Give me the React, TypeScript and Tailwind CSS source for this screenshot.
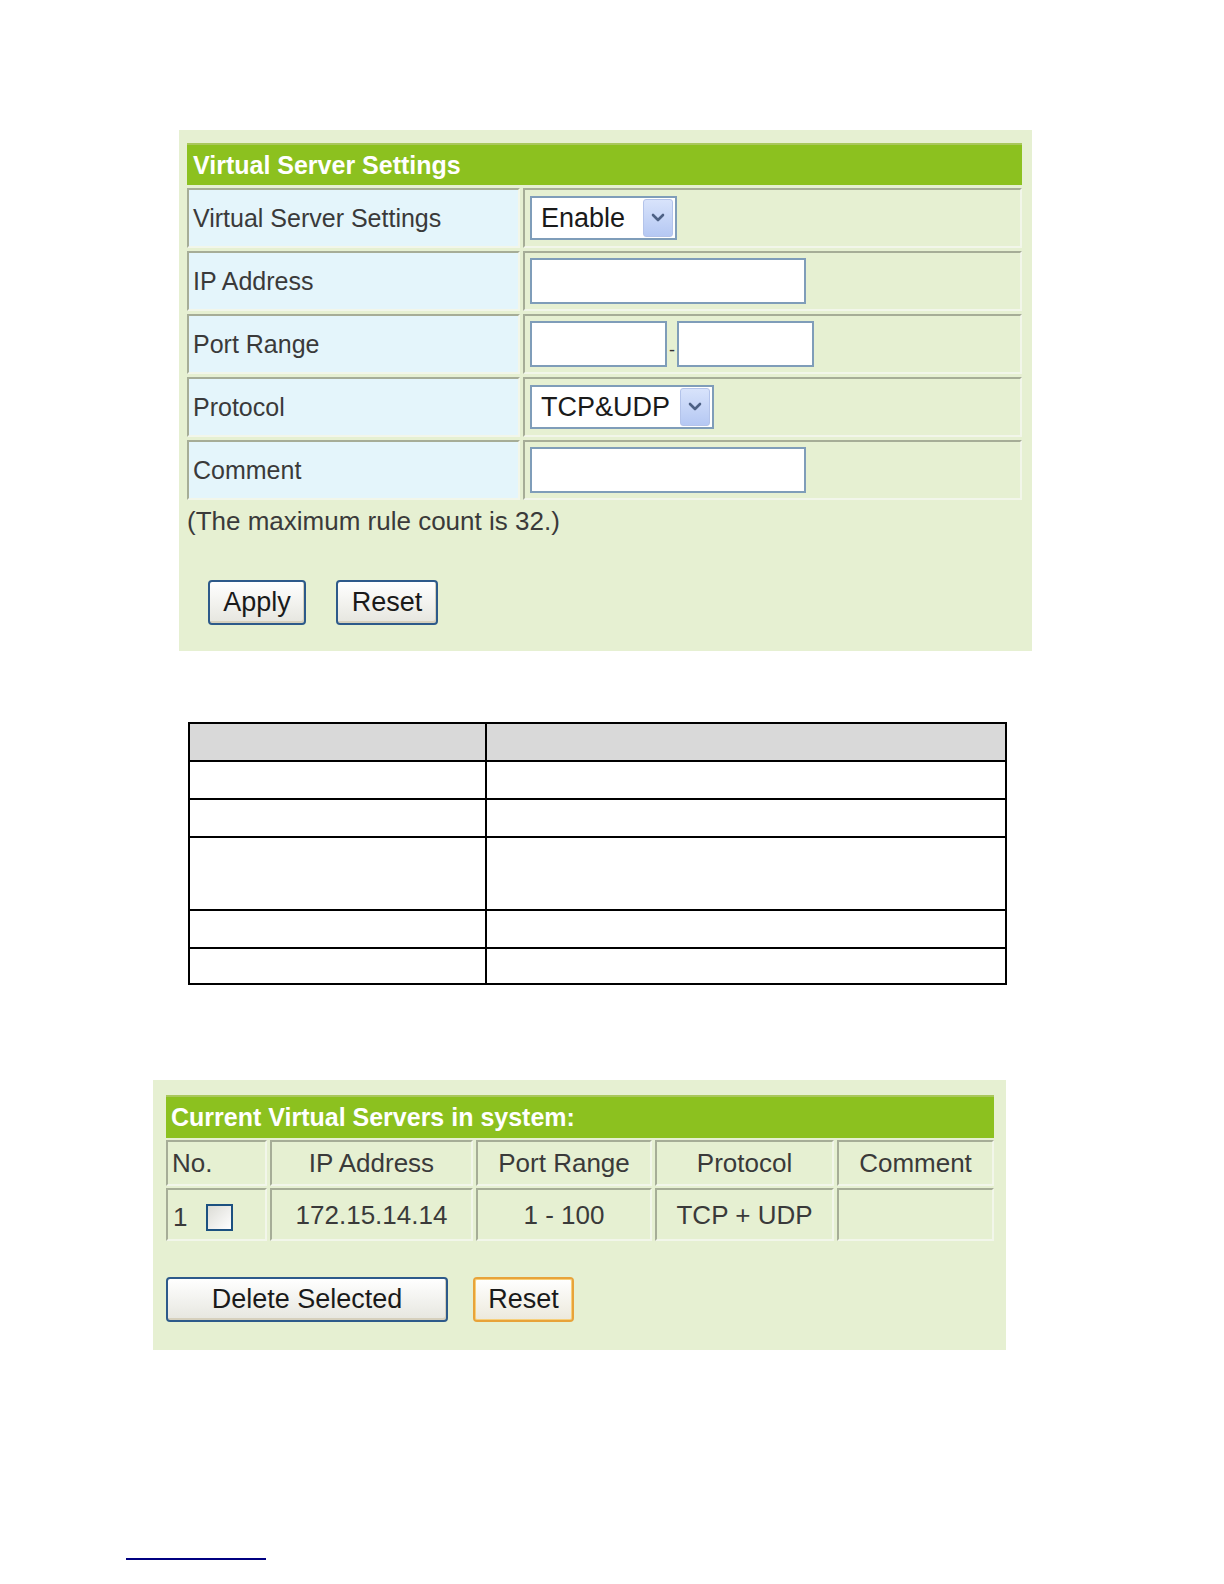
import React from 'react';

const font = { fontFamily: '"Liberation Sans", Arial, sans-serif' };

function Chevron() {
  return (
    <svg width="14" height="10" viewBox="0 0 14 10" aria-hidden>
      <path d="M2 2l5 5 5-5" fill="none" stroke="#4d6185" strokeWidth="2.6" strokeLinecap="round" strokeLinejoin="round" />
    </svg>
  );
}

function Select({ value, width }: { value: string; width: string }) {
  return (
    <div className={`flex h-[44px] items-center border-2 border-[#7f9db9] bg-white ${width}`}>
      <span className="flex-1 pl-[9px] text-[27px] leading-none text-[#1a1a1a]">{value}</span>
      <span className="mr-[2px] grid h-[38px] w-[30px] place-items-center rounded-[3px] border border-[#b3c3ea] bg-gradient-to-b from-[#d8e3fb] to-[#b5c8f3]">
        <Chevron />
      </span>
    </div>
  );
}

function Input({ width }: { width: string }) {
  return <div className={`h-[46px] border-2 border-[#7f9db9] bg-white ${width}`} />;
}

const cellBorder = 'border-2 border-t-[#a6ad97] border-l-[#a6ad97] border-b-[#f2f6ea] border-r-[#f2f6ea]';

function Row({ label, children }: { label: string; children: React.ReactNode }) {
  return (
    <div className="flex h-[60px] gap-[3px]">
      <div className={`flex w-[333px] items-center bg-[#e4f5fb] pl-[4px] text-[25px] leading-none text-[#3a3a3a] ${cellBorder}`}>
        {label}
      </div>
      <div className={`flex flex-1 items-center gap-[2px] pl-[5px] ${cellBorder}`}>{children}</div>
    </div>
  );
}

function Button({ children, className = '' }: { children: React.ReactNode; className?: string }) {
  return (
    <div
      className={`grid h-[45px] place-items-center rounded-[4px] border-2 border-[#2d5a8a] bg-gradient-to-b from-white to-[#e6e6df] text-[27px] leading-none text-[#1a1a1a] shadow-[inset_-1px_-2px_0_#d6d0bd] ${className}`}
    >
      {children}
    </div>
  );
}

export default function App() {
  const cols = [
    { w: 'w-[101px]', head: 'No.', align: 'justify-start pl-[4px]' },
    { w: 'w-[203px]', head: 'IP Address', align: 'justify-center' },
    { w: 'w-[176px]', head: 'Port Range', align: 'justify-center' },
    { w: 'w-[179px]', head: 'Protocol', align: 'justify-center' },
    { w: 'w-[157px]', head: 'Comment', align: 'justify-center' },
  ];

  return (
    <div className="w-full bg-white pt-[130px] pb-[20px]" style={font}>
      {/* settings form */}
      <div className="ml-[179px] w-[853px] bg-[#e6f0d2] pb-[26px] pl-[8px] pr-[10px] pt-[13px]">
        <div className="flex h-[42px] items-center border-t-2 border-[#a9c75c] bg-[#8cc11f] pl-[6px] text-[25px] font-bold leading-none text-white">
          Virtual Server Settings
        </div>
        <div className="mt-[3px] flex flex-col gap-[3px]">
          <Row label="Virtual Server Settings">
            <Select value="Enable" width="w-[147px]" />
          </Row>
          <Row label="IP Address">
            <Input width="w-[276px]" />
          </Row>
          <Row label="Port Range">
            <Input width="w-[137px]" />
            <span className="mt-[12px] text-[18px] leading-none text-[#333]">-</span>
            <Input width="w-[137px]" />
          </Row>
          <Row label="Protocol">
            <Select value="TCP&UDP" width="w-[184px]" />
          </Row>
          <Row label="Comment">
            <Input width="w-[276px]" />
          </Row>
        </div>
        <div className="mt-[6px] h-[30px] text-[26px] leading-[30px] text-[#3a3a3a]">(The maximum rule count is 32.)</div>
        <div className="mt-[44px] flex gap-[30px] pl-[21px]">
          <Button className="w-[98px]">Apply</Button>
          <Button className="w-[102px]">Reset</Button>
        </div>
      </div>

      {/* empty description table */}
      <div className="ml-[188px] mt-[71px] w-[819px] border-2 border-black">
        {[36, 36, 36, 71, 36, 34].map((h, i) => (
          <div
            key={i}
            className={`flex box-content ${i > 0 ? 'border-t-2 border-black' : ''} ${i === 0 ? 'bg-[#d9d9d9]' : 'bg-white'}`}
            style={{ height: h }}
          >
            <div className="w-[297px] border-r-2 border-black" />
            <div className="flex-1" />
          </div>
        ))}
      </div>

      {/* current servers list */}
      <div className="ml-[153px] mt-[95px] w-[853px] bg-[#e6f0d2] pb-[28px] pl-[13px] pr-[12px] pt-[15px]">
        <div className="flex h-[43px] items-center border-t-2 border-[#a9c75c] bg-[#8cc11f] pl-[5px] text-[25px] font-bold leading-none text-white">
          Current Virtual Servers in system:
        </div>
        <div className="mt-[2px] flex h-[46px] gap-[3px]">
          {cols.map((c) => (
            <div key={c.head} className={`flex items-center text-[26px] leading-none text-[#3a3a3a] ${c.w} ${c.align} ${cellBorder}`}>
              {c.head}
            </div>
          ))}
        </div>
        <div className="mt-[2px] flex h-[53px] gap-[3px]">
          <div className={`flex w-[101px] items-center gap-[19px] pl-[5px] pt-[5px] text-[26px] leading-none text-[#3a3a3a] ${cellBorder}`}>
            <span>1</span>
            <span className="h-[27px] w-[27px] border-2 border-[#1c5180] bg-gradient-to-br from-[#dcdcd6] to-white" />
          </div>
          <div className={`flex w-[203px] items-center justify-center text-[26px] leading-none text-[#3a3a3a] ${cellBorder}`}>172.15.14.14</div>
          <div className={`flex w-[176px] items-center justify-center text-[26px] leading-none text-[#3a3a3a] ${cellBorder}`}>1 - 100</div>
          <div className={`flex w-[179px] items-center justify-center text-[26px] leading-none text-[#3a3a3a] ${cellBorder}`}>TCP + UDP</div>
          <div className={`w-[157px] ${cellBorder}`} />
        </div>
        <div className="mt-[36px] flex gap-[25px]">
          <Button className="w-[282px]">Delete Selected</Button>
          <div className="grid h-[45px] w-[101px] place-items-center rounded-[4px] border-2 border-[#e8a33a] bg-gradient-to-b from-white to-[#ece9dc] text-[27px] leading-none text-[#1a1a1a] shadow-[inset_0_0_0_1px_#f7cf7a]">
            Reset
          </div>
        </div>
      </div>

      <div className="ml-[126px] mt-[208px] h-[2px] w-[140px] bg-[#000080]" />
    </div>
  );
}
